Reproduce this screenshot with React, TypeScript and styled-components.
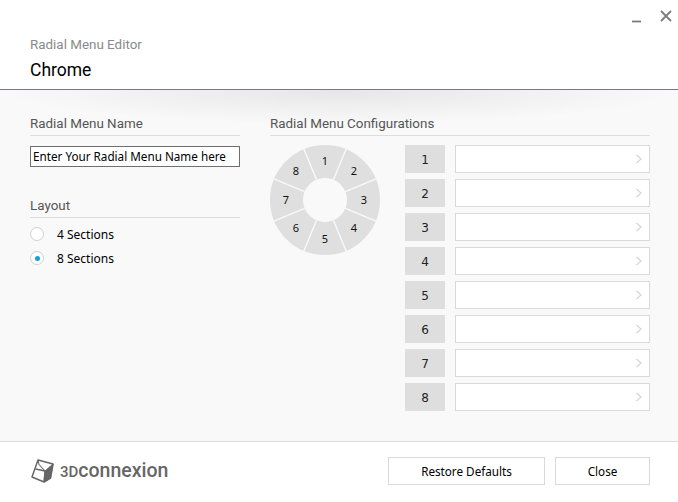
import React from "react";
import styled, { createGlobalStyle } from "styled-components";

const GlobalStyle = createGlobalStyle`
  html, body {
    margin: 0;
    padding: 0;
    background: #fff;
  }
  * {
    box-sizing: border-box;
  }
`;

const Window = styled.div`
  width: 678px;
  height: 502px;
  display: flex;
  flex-direction: column;
  background: #fff;
  overflow: hidden;
  font-family: Roboto, "Noto Sans", sans-serif;
`;

const Header = styled.header`
  height: 90px;
  padding: 0 0 0 30px;
  border-bottom: 1px solid #1d97d2;
  display: flex;
  flex-direction: column;
`;

const WindowControls = styled.div`
  height: 30px;
  padding: 9px 5px 0 0;
  display: flex;
  justify-content: flex-end;
  gap: 15px;
`;

const ControlIcon = styled.svg`
  width: 14px;
  height: 14px;
  stroke: #7c7c7c;
  stroke-width: 1.8;
  fill: none;
`;

const AppName = styled.div`
  margin-top: 5px;
  font-size: 13.4px;
  line-height: 20px;
  color: #8a8a8a;
`;

const PageName = styled.div`
  margin-top: 3px;
  font-size: 17.5px;
  line-height: 24px;
  color: #000;
`;

const Body = styled.main`
  position: relative;
  flex: 1;
  background: #f9f9f9;
  padding: 24px 28px 0 30px;
  display: flex;
  gap: 30px;

  &::before {
    content: "";
    position: absolute;
    left: 0;
    right: 0;
    top: 0;
    height: 34px;
    background: radial-gradient(ellipse 50% 100% at 50% 0, #e6e6e6, rgba(249, 249, 249, 0));
  }
`;

const LeftColumn = styled.section`
  position: relative;
  width: 210px;
  display: flex;
  flex-direction: column;
`;

const RightColumn = styled.section`
  position: relative;
  width: 380px;
  display: flex;
  flex-direction: column;
`;

const SectionTitle = styled.h2`
  margin: 0;
  height: 22px;
  font-size: 13.4px;
  font-weight: 400;
  line-height: 20px;
  color: #555;
  border-bottom: 1px solid #dcdcdc;
`;

const NameInput = styled.input`
  margin-top: 10px;
  height: 21px;
  width: 210px;
  padding: 0 2px 2px;
  border: 1px solid #6f6f6f;
  background: #fff;
  font-family: "Noto Sans", sans-serif;
  font-size: 11.7px;
  color: #000;
  outline: none;

  &::placeholder {
    color: #000;
    opacity: 1;
  }
`;

const LayoutTitle = styled(SectionTitle)`
  margin-top: 29px;
`;

const RadioList = styled.div`
  margin-top: 4px;
  display: flex;
  flex-direction: column;
`;

const RadioRow = styled.label`
  height: 24px;
  display: flex;
  align-items: center;
  font-family: "Noto Sans", sans-serif;
  font-size: 12px;
  color: #000;
`;

const RadioCircle = styled.span<{ $checked?: boolean }>`
  width: 14px;
  height: 14px;
  margin-right: 13px;
  border-radius: 50%;
  border: 1px solid #cfcfcf;
  background: #fff;
  display: flex;
  align-items: center;
  justify-content: center;

  &::after {
    content: "";
    width: 5px;
    height: 5px;
    border-radius: 50%;
    background: ${(p) => (p.$checked ? "#14a0dc" : "transparent")};
  }
`;

const ConfigArea = styled.div`
  margin-top: 9px;
  display: flex;
`;

const WheelBox = styled.div`
  width: 135px;
  flex: none;
`;

const WheelText = styled.text`
  font-family: "Noto Sans", sans-serif;
  font-size: 11px;
  fill: #111;
  text-anchor: middle;
  dominant-baseline: central;
`;

const SlotList = styled.div`
  width: 245px;
  display: flex;
  flex-direction: column;
  gap: 6px;
`;

const SlotRow = styled.div`
  display: flex;
  gap: 10px;
  height: 28px;
`;

const SlotNumber = styled.div`
  width: 40px;
  padding-top: 1px;
  background: #dedede;
  display: flex;
  align-items: center;
  justify-content: center;
  font-family: "DejaVu Sans", sans-serif;
  font-size: 12px;
  color: #222;
`;

const SlotField = styled.div`
  flex: 1;
  background: #fff;
  border: 1px solid #d9d9d9;
  display: flex;
  align-items: center;
  justify-content: flex-end;
  padding-right: 6px;
`;

const Chevron = styled.svg`
  width: 8px;
  height: 10px;
  stroke: #d4d4d4;
  stroke-width: 1.2;
  fill: none;
`;

const Footer = styled.footer`
  height: 61px;
  border-top: 1px solid #dcdcdc;
  padding: 15px 28px 0 30px;
  display: flex;
  justify-content: space-between;
`;

const Brand = styled.div`
  display: flex;
  align-items: center;
  height: 28px;
  gap: 4px;
`;

const BrandName = styled.span`
  padding-top: 1px;
  font-family: Roboto, sans-serif;
  font-weight: 500;
  font-size: 19.5px;
  line-height: 24px;
  color: #666;
`;

const BrandPrefix = styled.span`
  font-size: 15px;
`;

const FooterButtons = styled.div`
  display: flex;
  gap: 10px;
`;

const Button = styled.button<{ $width: number }>`
  width: ${(p) => p.$width}px;
  height: 28px;
  padding: 0;
  background: #fff;
  border: 1px solid #d9d9d9;
  font-family: "Noto Sans", sans-serif;
  font-size: 11.7px;
  color: #000;
`;

const CX = 55;
const CY = 55;
const OUTER = 55;
const INNER = 22;

const polar = (r: number, deg: number) => {
  const a = ((deg - 90) * Math.PI) / 180;
  return [CX + r * Math.cos(a), CY + r * Math.sin(a)];
};

const slots = [1, 2, 3, 4, 5, 6, 7, 8];

const RadialWheel = () => (
  <svg width="110" height="110" viewBox="0 0 110 110">
    <circle cx={CX} cy={CY} r={(OUTER + INNER) / 2} fill="none" stroke="#dfdfdf" strokeWidth={OUTER - INNER} />
    {slots.map((n, i) => {
      const [x1, y1] = polar(INNER, i * 45 - 22.5);
      const [x2, y2] = polar(OUTER + 1, i * 45 - 22.5);
      const [tx, ty] = polar(i % 2 ? 41 : 39, i * 45);
      return (
        <g key={n}>
          <line x1={x1} y1={y1} x2={x2} y2={y2} stroke="#f9f9f9" strokeWidth="1.4" />
          <WheelText x={tx} y={ty - 1}>
            {n}
          </WheelText>
        </g>
      );
    })}
  </svg>
);

const CubeLogo = () => (
  <svg width="26" height="26" viewBox="0 0 26 26" fill="none" stroke="#666" strokeLinejoin="round">
    <path d="M8 2 L23 6 L20.5 20 L14 24 L2 19 Z" strokeWidth="1.5" />
    <path d="M5.5 11 L15 13 L14 24" strokeWidth="1.3" />
    <path d="M15 13 L23 6 L20.5 20 L14 24 Z" fill="#666" />
    <path d="M8 2 L9 6.5 L15 13" strokeWidth="1.1" />
  </svg>
);

const App: React.FC = () => {
  return (
    <Window>
      <GlobalStyle />
      <Header>
        <WindowControls>
          <ControlIcon viewBox="0 0 14 14">
            <path d="M2 12.5H11" />
          </ControlIcon>
          <ControlIcon viewBox="0 0 14 14">
            <path d="M2 2L12 12M12 2L2 12" />
          </ControlIcon>
        </WindowControls>
        <AppName>Radial Menu Editor</AppName>
        <PageName>Chrome</PageName>
      </Header>
      <Body>
        <LeftColumn>
          <SectionTitle>Radial Menu Name</SectionTitle>
          <NameInput placeholder="Enter Your Radial Menu Name here" />
          <LayoutTitle>Layout</LayoutTitle>
          <RadioList>
            <RadioRow>
              <RadioCircle />4 Sections
            </RadioRow>
            <RadioRow>
              <RadioCircle $checked />8 Sections
            </RadioRow>
          </RadioList>
        </LeftColumn>
        <RightColumn>
          <SectionTitle>Radial Menu Configurations</SectionTitle>
          <ConfigArea>
            <WheelBox>
              <RadialWheel />
            </WheelBox>
            <SlotList>
              {slots.map((n) => (
                <SlotRow key={n}>
                  <SlotNumber>{n}</SlotNumber>
                  <SlotField>
                    <Chevron viewBox="0 0 8 10">
                      <path d="M1.5 1L6 5L1.5 9" />
                    </Chevron>
                  </SlotField>
                </SlotRow>
              ))}
            </SlotList>
          </ConfigArea>
        </RightColumn>
      </Body>
      <Footer>
        <Brand>
          <CubeLogo />
          <BrandName>
            <BrandPrefix>3D</BrandPrefix>connexion
          </BrandName>
        </Brand>
        <FooterButtons>
          <Button $width={157}>Restore Defaults</Button>
          <Button $width={95}>Close</Button>
        </FooterButtons>
      </Footer>
    </Window>
  );
};

export default App;
